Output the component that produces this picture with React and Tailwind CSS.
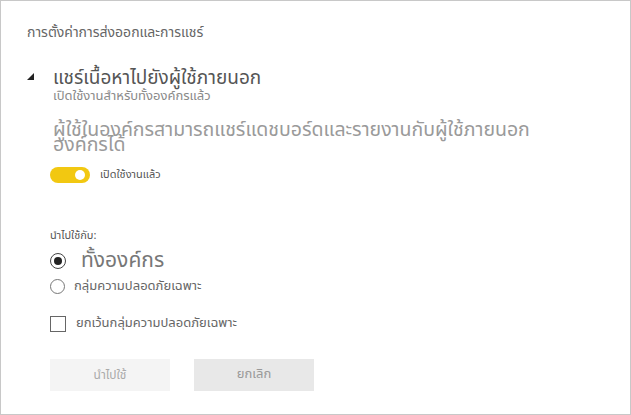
export default function App() {
  const font = { fontFamily: '"Noto Sans Thai", "Leelawadee UI", Tahoma, "DejaVu Sans", sans-serif' };
  return (
    <div className="w-[631px] h-[415px] bg-white border border-[#c8c8c8] box-border relative" style={font}>
      <div className="pl-[26px] pt-[22px]">
        <div className="text-[14px] leading-[20px] text-[#666666]">การตั้งค่าการส่งออกและการแชร์</div>
      </div>
      <div className="flex mt-[26px] pl-[26px]">
        <div className="w-[26px] pt-[4px]">
          <svg width="7" height="7" viewBox="0 0 7 7"><polygon points="7,0 7,7 0,7" fill="#222" /></svg>
        </div>
        <div className="flex flex-col">
          <div className="text-[19px] leading-[20px] text-[#555555]">แชร์เนื้อหาไปยังผู้ใช้ภายนอก</div>
          <div className="text-[13px] leading-[15px] text-[#8a8a8a]">เปิดใช้งานสำหรับทั้งองค์กรแล้ว</div>
          <div className="mt-[19px] text-[19.5px] leading-[15px] text-[#9a9a9a] w-[520px]">ผู้ใช้ในองค์กรสามารถแชร์แดชบอร์ดและรายงานกับผู้ใช้ภายนอก องค์กรได้</div>
        </div>
      </div>
      <div className="pl-[49px] mt-[14px] flex items-center gap-[10px]">
        <div className="w-[40px] h-[16px] rounded-full bg-[#f2c811] flex items-center justify-end pr-[5px]">
          <div className="w-[10px] h-[10px] rounded-full bg-white"></div>
        </div>
        <div className="text-[11px] text-[#555555]">เปิดใช้งานแล้ว</div>
      </div>
      <div className="pl-[49px] mt-[45px] text-[11px] leading-[14px] text-[#555555]">นำไปใช้กับ:</div>
      <div className="pl-[49px] mt-[6px] flex items-center gap-[15px] h-[24px]">
        <div className="w-[16px] h-[16px] rounded-full border border-[#444] flex items-center justify-center">
          <div className="w-[8px] h-[8px] rounded-full bg-[#222]"></div>
        </div>
        <div className="text-[21px] leading-[24px] text-[#777777]">ทั้งองค์กร</div>
      </div>
      <div className="pl-[49px] mt-[5px] flex items-center gap-[9px] h-[18px]">
        <div className="w-[15px] h-[15px] rounded-full border border-[#777]"></div>
        <div className="text-[13px] text-[#666666]">กลุ่มความปลอดภัยเฉพาะ</div>
      </div>
      <div className="pl-[49px] mt-[19px] flex items-center gap-[10px] h-[18px]">
        <div className="w-[16px] h-[16px] border border-[#666]"></div>
        <div className="text-[13px] text-[#666666]">ยกเว้นกลุ่มความปลอดภัยเฉพาะ</div>
      </div>
      <div className="pl-[49px] mt-[26px] flex gap-[24px]">
        <div className="w-[120px] h-[32px] bg-[#f4f4f4] flex items-center justify-center text-[12px] text-[#aaaaaa]">นำไปใช้</div>
        <div className="w-[120px] h-[32px] bg-[#e8e8e8] flex items-center justify-center text-[13px] text-[#999999]">ยกเลิก</div>
      </div>
    </div>
  );
}
